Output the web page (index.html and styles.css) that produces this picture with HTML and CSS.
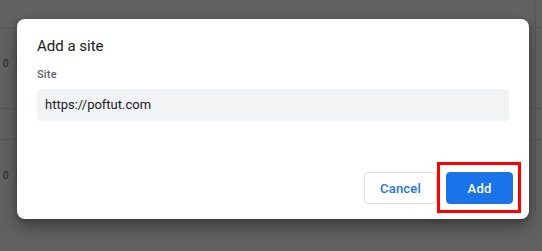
FILE: index.html
```html
<!DOCTYPE html>
<html>
<head>
<meta charset="utf-8">
<link rel="stylesheet" href="styles.css">
</head>
<body>
<div class="bg">
  <div class="cell r1"></div><div class="cell side r1"></div>
  <div class="cell r2"><span class="rowtext">0 Sites</span></div><div class="cell side r2"></div>
  <div class="cell r3"></div><div class="cell side r3"></div>
  <div class="cell r4"><span class="rowtext">0 Sites</span></div><div class="cell side r4"></div>
</div>
<div class="dialog">
  <div class="title">Add a site</div>
  <div class="body">
    <div class="label">Site</div>
    <div class="input">https://poftut.com</div>
  </div>
  <div class="buttons">
    <button class="btn cancel">Cancel</button>
    <button class="btn action">Add</button>
  </div>
</div>
<div class="highlight"></div>
</body>
</html>
```
FILE: styles.css
```css
html, body {
  margin: 0;
  padding: 0;
}
body {
  width: 542px;
  height: 251px;
  overflow: hidden;
  background: #616161;
  position: relative;
  font-family: Roboto, "Liberation Sans", Arial, sans-serif;
}
.bg {
  display: grid;
  grid-template-columns: 536px 1fr;
}
.cell {
  border-bottom: 1px solid #575757;
  border-right: 1px solid #575757;
  display: flex;
  align-items: center;
}
.cell.side {
  border-right: none;
}
.r1 { height: 27px; }
.r2 { height: 80px; }
.r3 { height: 30px; }
.r4 { height: 72px; border-bottom: none; }
.rowtext {
  padding-left: 3px;
  font-size: 10px;
  color: #262626;
  letter-spacing: 0.5px;
  word-spacing: 4px;
}
.r2 .rowtext { margin-top: -10px; }
.r4 .rowtext { margin-top: -2px; }
.dialog {
  position: absolute;
  left: 17px;
  top: 19px;
  width: 512px;
  height: 200px;
  box-sizing: border-box;
  background: #fff;
  border-radius: 8px;
  box-shadow: 0 8px 16px rgba(0, 0, 0, 0.32), 0 2px 6px rgba(0, 0, 0, 0.2);
  display: flex;
  flex-direction: column;
}
.title {
  padding: 15px 20px 0;
  font-size: 15px;
  line-height: 24px;
  color: #202124;
}
.body {
  padding: 9px 20px 0;
}
.label {
  font-size: 11px;
  line-height: 16px;
  font-weight: 500;
  color: #5f6368;
  margin-bottom: 6px;
  letter-spacing: 0.2px;
}
.input {
  height: 32px;
  box-sizing: border-box;
  background: #f1f3f4;
  border-radius: 4px;
  padding: 0 8px;
  font-size: 13px;
  line-height: 32px;
  color: #202124;
}
.buttons {
  margin-top: auto;
  display: flex;
  justify-content: flex-end;
  gap: 9px;
  padding: 0 16px 15px;
}
.btn {
  height: 32px;
  min-width: 67px;
  box-sizing: border-box;
  padding: 0 15px;
  border-radius: 4px;
  font-family: Roboto, "Liberation Sans", Arial, sans-serif;
  font-size: 13px;
  font-weight: 500;
  letter-spacing: 0.2px;
}
.cancel {
  background: #fff;
  border: 1px solid #dadce0;
  color: #1a73e8;
}
.action {
  background: #1a73e8;
  border: 1px solid #1a73e8;
  color: #fff;
}
.highlight {
  position: absolute;
  left: 437px;
  top: 162px;
  width: 84px;
  height: 51px;
  box-sizing: border-box;
  border: 3px solid #ff0000;
}
```
